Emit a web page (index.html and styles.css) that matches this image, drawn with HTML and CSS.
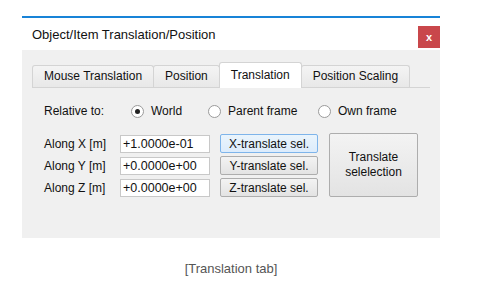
FILE: index.html
```html
<!DOCTYPE html>
<html lang="en">

<head>
    <meta charset="UTF-8" />
    <title>Object/Item Translation/Position</title>
    <link rel="stylesheet" href="styles.css">
</head>

<body>
    <div class="window">
        <div class="title-bar">
            <span class="title">Object/Item Translation/Position</span>
            <span class="close-btn">x</span>
        </div>

        <div class="window-body">
            <div class="tabs">
                <div class="tab">Mouse Translation</div>
                <div class="tab">Position</div>
                <div class="tab active">Translation</div>
                <div class="tab">Position Scaling</div>
            </div>

            <div class="pane">
                <div class="radio-row">
                    <span class="row-label">Relative to:</span>
                    <label class="radio radio-world"><span class="dot checked"></span>World</label>
                    <label class="radio radio-parent"><span class="dot"></span>Parent frame</label>
                    <label class="radio"><span class="dot"></span>Own frame</label>
                </div>

                <div class="fields">
                    <div class="field-grid">
                        <span class="field-label">Along X [m]</span>
                        <input class="field-input" type="text" value="+1.0000e-01" />
                        <button class="btn focused">X-translate sel.</button>

                        <span class="field-label">Along Y [m]</span>
                        <input class="field-input" type="text" value="+0.0000e+00" />
                        <button class="btn">Y-translate sel.</button>

                        <span class="field-label">Along Z [m]</span>
                        <input class="field-input" type="text" value="+0.0000e+00" />
                        <button class="btn">Z-translate sel.</button>
                    </div>
                    <button class="btn big-btn">Translate<br>selelection</button>
                </div>
            </div>
        </div>
    </div>

    <p class="caption">[Translation tab]</p>
</body>

</html>
```

FILE: styles.css
```css
body {
    margin: 0;
    background: #fff;
    font-family: 'Liberation Sans', Arial, sans-serif;
    font-size: 12px;
    color: #111;
}

.window {
    width: 418px;
    margin: 16px 0 0 22px;
    border-top: 2px solid #1883d7;
}

.title-bar {
    height: 32px;
    display: flex;
    align-items: center;
    justify-content: space-between;
    background: #fff;
    padding-left: 10px;
}

.title {
    font-size: 13px;
}

.close-btn {
    width: 22px;
    height: 22px;
    margin-top: 5px;
    background: #c9474b;
    color: #fff;
    font-weight: bold;
    font-size: 11px;
    display: flex;
    align-items: center;
    justify-content: center;
}

.window-body {
    height: 188px;
    background: #f0f0f0;
    padding: 12px 10px 0 10px;
    box-sizing: border-box;
}

.tabs {
    display: flex;
    align-items: flex-end;
    height: 25px;
}

.tab {
    height: 21px;
    line-height: 21px;
    padding: 0 11px;
    border: 1px solid #d4d4d4;
    border-bottom: none;
    border-radius: 3px 3px 0 0;
    background: linear-gradient(#f4f4f4, #e8e8e8);
    margin-right: -1px;
}

.tab.active {
    height: 25px;
    line-height: 24px;
    background: #fff;
    position: relative;
    z-index: 1;
    margin-bottom: -1px;
}

.pane {
    width: 398px;
    border-top: 1px solid #d4d4d4;
    padding: 15px 0 0 12px;
    box-sizing: border-box;
}

.radio-row {
    display: flex;
    align-items: center;
    height: 16px;
}

.row-label {
    width: 87px;
}

.radio {
    display: flex;
    align-items: center;
}

.radio-world {
    width: 77px;
}

.radio-parent {
    width: 110px;
}

.dot {
    width: 13px;
    height: 13px;
    border: 1px solid #9a9a9a;
    border-radius: 50%;
    background: #fff;
    margin-right: 7px;
    box-sizing: border-box;
    display: flex;
    align-items: center;
    justify-content: center;
}

.dot.checked::after {
    content: "";
    width: 5px;
    height: 5px;
    border-radius: 50%;
    background: #222;
}

.fields {
    display: flex;
    align-items: flex-start;
    margin-top: 15px;
}

.field-grid {
    display: grid;
    grid-template-columns: 66px 90px 98px;
    grid-auto-rows: 19px;
    column-gap: 10px;
    row-gap: 3px;
    align-items: center;
}

.field-label {
    white-space: nowrap;
}

.field-input {
    height: 18px;
    margin: 0;
    padding: 0 2px;
    border: 1px solid #c8c8c8;
    background: #fff;
    font-family: inherit;
    font-size: 12.5px;
    color: #111;
    box-sizing: border-box;
    width: 90px;
}

.btn {
    height: 19px;
    margin: 0;
    padding: 0;
    border: 1px solid #adadad;
    border-radius: 2px;
    background: linear-gradient(#f3f3f3, #e3e3e3);
    font-family: inherit;
    font-size: 12px;
    color: #111;
}

.btn.focused {
    border-color: #7eb4ea;
    background: linear-gradient(#eaf4fc, #dcecfc);
}

.big-btn {
    width: 89px;
    height: 64px;
    margin: -1px 0 0 11px;
    line-height: 15px;
}

.caption {
    width: 418px;
    margin: 23px 0 0 22px;
    text-align: center;
    font-size: 13px;
    color: #555;
}
```
